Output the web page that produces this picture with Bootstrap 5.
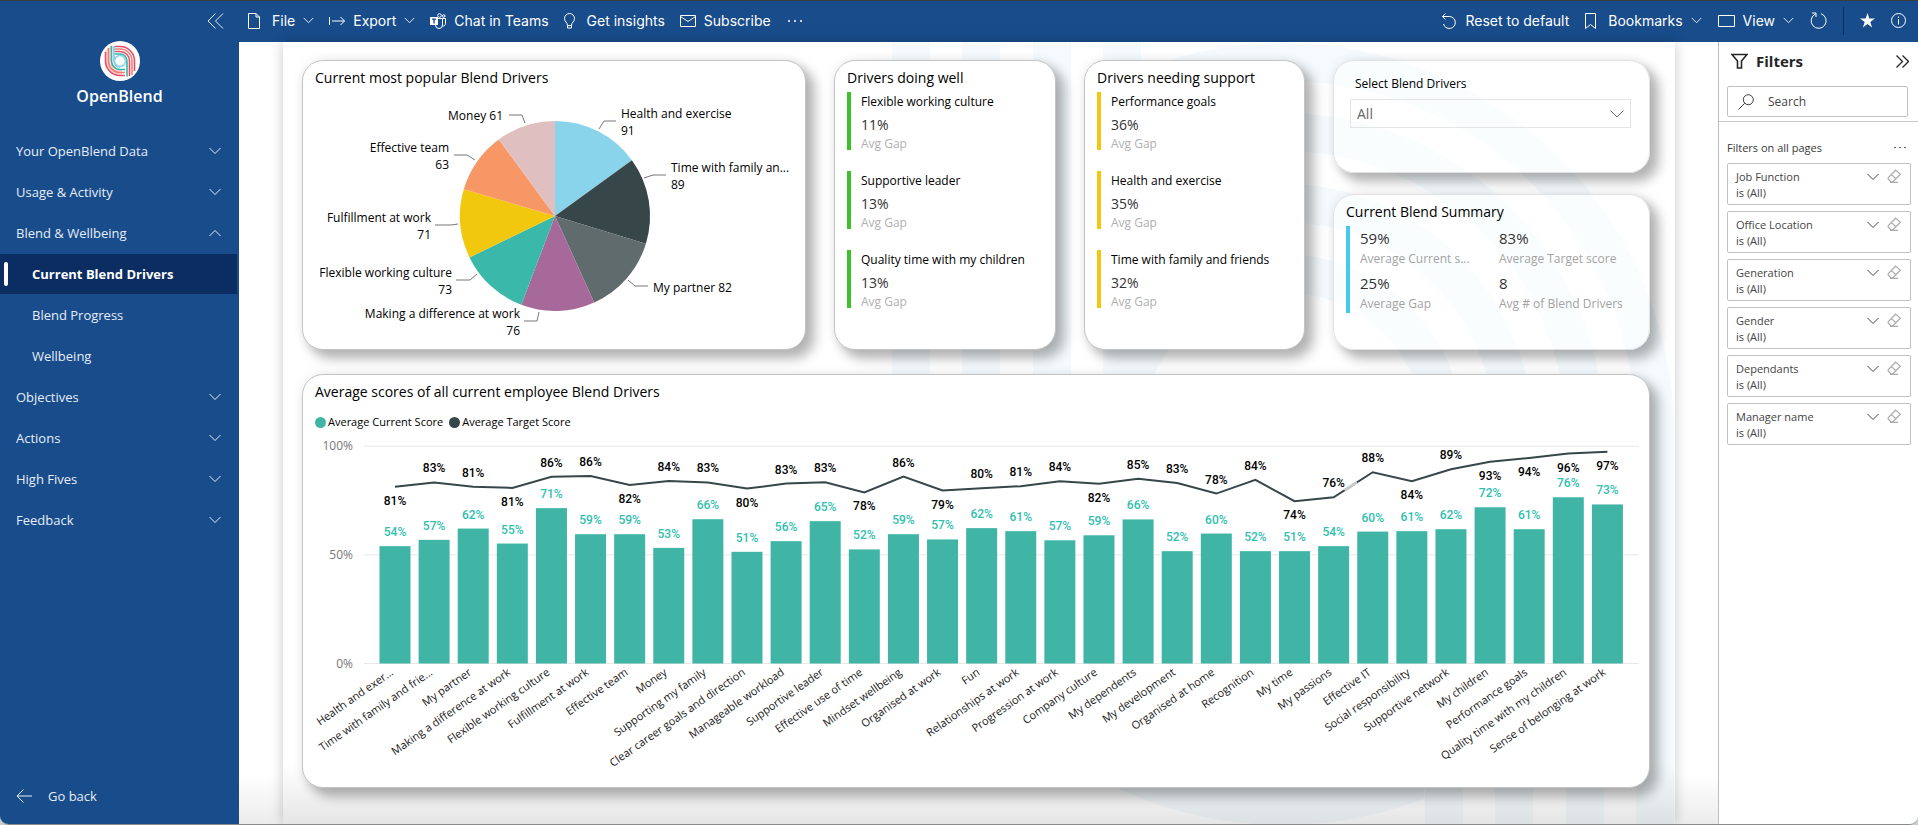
<!DOCTYPE html>
<html lang="en">
<head>
<meta charset="utf-8">
<meta name="viewport" content="width=device-width, initial-scale=1">
<title>OpenBlend - Current Blend Drivers</title>
<link href="https://cdn.jsdelivr.net/npm/bootstrap@5.3.0/dist/css/bootstrap.min.css" rel="stylesheet">
<style>
:root { --brand: #184c8b; --brand-dark: #0c2d62; --ui: "Open Sans", "Noto Sans", sans-serif; }
body { font-family: var(--ui); font-size: 13px; line-height: 20px; color: #000; background: #c9ccd1; }
.app-frame { min-height: 100vh; border-top: 1px solid #3b3b3b; border-bottom: 1px solid #8a8a8a; border-radius: 0 0 9px 9px; overflow: hidden; }
svg { display: block; flex: none; }
.ico { fill: none; stroke: currentColor; stroke-width: 1; }
.plain-btn { background: none; border: 0; padding: 0; color: inherit; }

.side-panel { width: 239px; flex: none; background: var(--brand); color: #e6edf6; }
.side-head { height: 121px; padding: 12px 15px 0 0; }
.brand-name { font-size: 16px; line-height: 22px; font-weight: 600; color: #fff; }
.side-nav a { display: flex; align-items: center; justify-content: space-between; height: 41px; padding: 0 18px 0 16px; color: inherit; text-decoration: none; font-size: 13px; }
.side-nav a.sub { padding-left: 32px; }
.side-nav a.current { height: 40px; margin: 1px 2px 0 0; padding-left: 4px; gap: 24px; justify-content: flex-start; background: var(--brand-dark); color: #fff; font-weight: 700; }
.side-nav a.current::before { content: ""; width: 4px; height: 24px; border-radius: 2px; background: #fff; }
.go-back { padding: 0 16px; gap: 16px; margin-bottom: 18px; }

.top-bar { height: 41px; background: var(--brand); color: #fff; font-family: Inter, "Liberation Sans", sans-serif; font-size: 14px; padding: 0 12px 2px 9px; }
.top-bar .plain-btn { display: flex; align-items: center; gap: 8px; }
.bar-left { gap: 15px; }
.top-rule { width: 1px; height: 28px; background: var(--brand-dark); }

.stage { padding: 0 43px 0 44px; background: linear-gradient(to bottom, transparent calc(100% - 50px), #ececec) #fff; }
.report { padding: 18px 25px 20px 19px; box-shadow: 0 0 12px rgba(0,0,0,.22);
  background: linear-gradient(to bottom, transparent calc(100% - 60px), rgba(0,0,0,.1)),
  url("data:image/svg+xml,%3Csvg xmlns='http://www.w3.org/2000/svg' width='784' height='784'%3E%3Cg fill='none' stroke='%23f4fafd' stroke-width='38'%3E%3Ccircle cx='392' cy='392' r='372'/%3E%3Ccircle cx='392' cy='392' r='302'/%3E%3Ccircle cx='392' cy='392' r='231'/%3E%3Ccircle cx='392' cy='392' r='161'/%3E%3Cpath fill='%23fff' stroke='none' d='M0 0h250v392H0zM533 392h251v392H533z'/%3E%3Cpath d='M20 0v392M90 0v392M161 0v392M231 0v392M553 392v392M623 392v392M694 392v392M764 392v392'/%3E%3C/g%3E%3C/svg%3E") right top no-repeat #fff; }
.tiles { display: grid; grid-template-columns: 504fr 222fr 221fr 317fr; column-gap: 28px; margin-bottom: 24px; }
.tile { background: #fff; border: 1px solid #c4c4c4; border-radius: 21px; box-shadow: 8px 8px 12px 1px rgba(0,0,0,.28), 0 0 12px rgba(0,0,0,.08); }
.tile.see-through { background: rgba(255,255,255,.55); border-color: #e2e2e2; background-clip: padding-box; }
.tile-title { font-size: 14px; line-height: 22px; font-weight: 400; margin: 0; padding: 6px 12px 0; }
svg text { font-family: var(--ui); }
.pie-svg, .combo-svg { width: 100%; height: auto; }
.pie-svg text { font-size: 12px; }
.combo-svg .axis { font-size: 12px; fill: #777; text-anchor: end; }
.combo-svg .cat { font-size: 11px; fill: #222; text-anchor: end; }
.combo-svg .val { font-family: Roboto, "Open Sans", sans-serif; font-size: 12px; font-weight: 500; text-anchor: middle; }

.drivers { display: flex; flex-direction: column; gap: 21px; padding: 3px 12px 0; }
.driver { border-left: 4px solid #3cc12d; padding-left: 10px; }
.driver.low { border-color: #f2c80f; }
.driver-name { font-size: 12px; line-height: 20px; white-space: nowrap; }
.driver-val { font-size: 14px; line-height: 26px; color: #333; }
.driver-note { font-size: 12px; line-height: 12px; color: #b0b0b0; }

.slicers { display: flex; flex-direction: column; gap: 21px; }
.slicer { height: 113px; padding: 12px 18px 0 16px; }
.slicer label { padding-left: 5px; line-height: 22px; font-size: 12px; }
.slicer select { height: 29px; margin-top: 4px; padding: 0 6px; border: 1px solid #e4e4e4; border-radius: 0; color: #666; font-size: 14px; line-height: 27px; background-color: transparent; background-size: 14px 8px; background-position: right 6px center; background-repeat: no-repeat; appearance: none;
  background-image: url("data:image/svg+xml,%3Csvg xmlns='http://www.w3.org/2000/svg' width='14' height='8' fill='none' stroke='%23666'%3E%3Cpath d='M.5.5 7 7 13.500.5'/%3E%3C/svg%3E"); }
.kpis { display: grid; grid-template-columns: 139px 1fr; row-gap: 3px; border-left: 4px solid #45cbe8; margin: 3px 6px 0 12px; padding-left: 10px; height: 87px; white-space: nowrap; }
.kpi-val { font-size: 15px; line-height: 24px; color: #333; }
.kpi-note { font-size: 12px; line-height: 18px; color: #a3a3a3; }
.legend-row { font-size: 11px; line-height: 20px; padding: 9px 12px 2px; gap: 6px; }
.key-dot { width: 11px; height: 11px; border-radius: 50%; display: inline-block; margin-right: 2px; }

.filter-pane { width: 200px; flex: none; border-left: 1px solid #bdbdbd; color: #3a3a3a; background: #fff; font-size: 12px; }
.pane-head { height: 44px; padding: 0 9px 6px 12px; color: #252525; }
.pane-title { font-size: 15px; font-weight: 700; margin: 0; }
.search-box { margin: 0 10px 4px 8px; height: 31px; border: 1px solid #c0c0c0; border-radius: 2px; padding: 0 10px; gap: 14px; }
.search-box input { border: 0; outline: 0; padding: 0; min-width: 0; width: 100%; font-size: 12px; color: #333; background: none; }
.search-box input::placeholder { color: #444; opacity: 1; }
.pane-sub { height: 42px; padding: 10px 8px 0; border-top: 1px solid #c8c8c8; font-size: 11px; }
.filter-list { gap: 6px; padding: 0 7px 0 8px; }
.filter-item { border: 1px solid #c0c0c0; border-radius: 2px; font-size: 11px; line-height: 16px; padding: 5px 9px 5px 8px; height: 42px; color: #444; }
</style>
</head>
<body>
<svg width="0" height="0" class="position-absolute" aria-hidden="true">
  <symbol id="chev" viewBox="0 0 12 8"><path d="M.5 1 6 6.500 11.500 1"/></symbol>
  <symbol id="eraser" viewBox="0 0 12 12"><path d="M1 7.500 7.500 1l4 3.500L5 11H3.500L1 8.500zM3.800 4.800l4 3.600M2.500 11.500h7"/></symbol>
</svg>
<div class="app-frame d-flex">
  <nav class="side-panel d-flex flex-column" aria-label="Report pages">
    <div class="side-head">
      <button class="plain-btn d-block ms-auto" aria-label="Collapse"><svg class="ico" width="17" height="16" viewBox="0 0 17 16" stroke-width="1.200"><path d="M8.500.5 1 8l7.500 7.500M16 .5 8.500 8l7.500 7.500"/></svg></button>
      <div class="d-flex flex-column align-items-center gap-1 pt-2" style="padding-left:15px">
        <svg class="mt-1" width="40" height="40" viewBox="0 0 40 40" fill="none">
          <circle cx="20" cy="20" r="20" fill="#fff"/>
          <path d="M5 10.500 8 7l4-3v16a8 8 0 0 0 8 8h2v7a15 15 0 0 1-17-15z" fill="#fbd3d3"/>
          <g stroke-width="1.600">
            <path d="M5.500 11v9a14.500 14.500 0 0 0 14.500 14.500h5" stroke="#ea4c6c"/>
            <path d="M8.500 7v13a11.500 11.500 0 0 0 11.500 11.500h5" stroke="#f27d6c"/>
            <path d="M11.500 5v15a8.500 8.500 0 0 0 8.500 8.500h5" stroke="#35b5a5"/>
            <path d="M14 5v15a6.500 6.500 0 0 0 6 6" stroke="#6ec8e6"/>
            <path d="M15 5.500h5A14.500 14.500 0 0 1 34.500 20v10" stroke="#ea4c6c"/>
            <path d="M15 8h5a12 12 0 0 1 12 12v14" stroke="#f3836c"/>
            <path d="M15 10.500h5A9.500 9.500 0 0 1 29.500 20v15" stroke="#ea4c6c"/>
            <path d="M15 13h5a7 7 0 0 1 7 7v15.500" stroke="#35b5a5"/>
            <circle cx="20" cy="20" r="5.500" stroke="#8ad4ec"/>
          </g>
        </svg>
        <div class="brand-name">OpenBlend</div>
      </div>
    </div>
    <div class="side-nav pt-2">
      <a href="#">Your OpenBlend Data<svg class="ico" width="12" height="8"><use href="#chev"/></svg></a>
      <a href="#">Usage &amp; Activity<svg class="ico" width="12" height="8"><use href="#chev"/></svg></a>
      <a href="#">Blend &amp; Wellbeing<svg class="ico" width="12" height="8" viewBox="0 0 12 8"><path d="M.5 7 6 1.500 11.500 7"/></svg></a>
      <a href="#" class="current" aria-current="page">Current Blend Drivers</a>
      <a href="#" class="sub">Blend Progress</a>
      <a href="#" class="sub">Wellbeing</a>
      <a href="#">Objectives<svg class="ico" width="12" height="8"><use href="#chev"/></svg></a>
      <a href="#">Actions<svg class="ico" width="12" height="8"><use href="#chev"/></svg></a>
      <a href="#">High Fives<svg class="ico" width="12" height="8"><use href="#chev"/></svg></a>
      <a href="#">Feedback<svg class="ico" width="12" height="8"><use href="#chev"/></svg></a>
    </div>
    <button class="plain-btn go-back d-flex align-items-center mt-auto"><svg class="ico" width="16" height="14" viewBox="0 0 16 14"><path d="M7.500.5 1 7l6.500 6.500M1 7h15"/></svg>Go back</button>
  </nav>

  <div class="d-flex flex-column flex-fill" style="min-width:0">
    <header class="top-bar d-flex align-items-center justify-content-between">
      <div class="bar-left d-flex align-items-center">
        <button class="plain-btn"><svg class="ico me-1" width="12" height="16" viewBox="0 0 12 16" stroke-width="1.200"><path d="M.5.500h7.500l3.500 3.500v11.500H.5zM8 .5V4h3.500"/></svg>File<svg class="ico" width="11" height="7"><use href="#chev"/></svg></button>
        <button class="plain-btn"><svg class="ico" width="16" height="10" viewBox="0 0 16 10"><path d="M.5 1v8M3 5h12.500M11.500 1l4 4-4 4"/></svg>Export<svg class="ico" width="11" height="7"><use href="#chev"/></svg></button>
        <button class="plain-btn"><svg class="ico" width="16" height="16" viewBox="0 0 16 16"><path fill="currentColor" stroke="none" fill-rule="evenodd" d="M0 4h8v8H0zM2 5.500v1.200h1.400V10.500h1.300V6.700H6V5.500z"/><circle cx="9.500" cy="2.500" r="1.800"/><circle cx="13.800" cy="3" r="1.300"/><path d="M8 5.500h4.500v6.500a3.500 3.500 0 0 1-7 0M12.500 5.500h3v5a2.500 2.500 0 0 1-3 2.500"/></svg>Chat in Teams</button>
        <button class="plain-btn"><svg class="ico me-1" width="11" height="16" viewBox="0 0 11 16"><path d="M3.500 12.500c0-3-3-3.800-3-7a5 5 0 0 1 10 0c0 3.200-3 4-3 7zM3.500 12.500v2.500h4v-2.500"/></svg>Get insights</button>
        <button class="plain-btn"><svg class="ico" width="16" height="12" viewBox="0 0 16 12"><path d="M.5.500h15v11H.5zM.5 1.500 8 6.500l7.500-5"/></svg>Subscribe</button>
        <button class="plain-btn" aria-label="More"><svg width="16" height="4" fill="currentColor"><circle cx="3" cy="2" r="1"/><circle cx="9" cy="2" r="1"/><circle cx="15" cy="2" r="1"/></svg></button>
      </div>
      <div class="d-flex align-items-center gap-3">
        <button class="plain-btn"><svg class="ico" width="16" height="16" viewBox="0 0 16 16"><path d="M4.500.5 1.500 3.500l3 3M1.500 3.500H8.500a6 6 0 1 1-6 7.500"/></svg>Reset to default</button>
        <button class="plain-btn"><svg class="ico me-1" width="11" height="16" viewBox="0 0 11 16"><path d="M.5.500h10v15l-5-4-5 4z"/></svg>Bookmarks<svg class="ico" width="11" height="7"><use href="#chev"/></svg></button>
        <button class="plain-btn"><svg class="ico" width="17" height="12" viewBox="0 0 17 12"><path d="M.5.500h16v11H.5z"/></svg>View<svg class="ico" width="11" height="7"><use href="#chev"/></svg></button>
        <button class="plain-btn" aria-label="Refresh"><svg class="ico" width="17" height="17" viewBox="0 0 17 17"><path d="M5.500 2A7.500 7.500 0 1 0 11 1.700M2 1h4v4"/></svg></button>
        <div class="top-rule"></div>
        <button class="plain-btn" aria-label="Favourite"><svg width="15" height="15" viewBox="0 0 15 15" fill="currentColor"><path d="M7.500 0l1.800 5.500H15l-4.700 3.400L12.100 14.500 7.500 11l-4.600 3.500 1.800-5.600L0 5.500h5.700z"/></svg></button>
        <button class="plain-btn" aria-label="Information"><svg class="ico" width="15" height="15" viewBox="0 0 15 15"><circle cx="7.500" cy="7.500" r="7"/><path d="M7.500 6v5.500M7.500 3.500v1.300"/></svg></button>
      </div>
    </header>

    <div class="d-flex flex-fill">
      <main class="stage flex-fill d-flex" style="min-width:0">
        <div class="report flex-fill">
          <div class="tiles">
            <section class="tile">
              <h2 class="tile-title">Current most popular Blend Drivers</h2>
              <svg class="pie-svg" id="pie" viewBox="0 0 502 260" role="img" aria-label="Current most popular Blend Drivers"></svg>
            </section>
            <section class="tile">
              <h2 class="tile-title">Drivers doing well</h2>
              <div class="drivers">
                <div class="driver"><div class="driver-name">Flexible working culture</div><div class="driver-val">11%</div><div class="driver-note">Avg Gap</div></div>
                <div class="driver"><div class="driver-name">Supportive leader</div><div class="driver-val">13%</div><div class="driver-note">Avg Gap</div></div>
                <div class="driver"><div class="driver-name">Quality time with my children</div><div class="driver-val">13%</div><div class="driver-note">Avg Gap</div></div>
              </div>
            </section>
            <section class="tile">
              <h2 class="tile-title">Drivers needing support</h2>
              <div class="drivers">
                <div class="driver low"><div class="driver-name">Performance goals</div><div class="driver-val">36%</div><div class="driver-note">Avg Gap</div></div>
                <div class="driver low"><div class="driver-name">Health and exercise</div><div class="driver-val">35%</div><div class="driver-note">Avg Gap</div></div>
                <div class="driver low"><div class="driver-name">Time with family and friends</div><div class="driver-val">32%</div><div class="driver-note">Avg Gap</div></div>
              </div>
            </section>
            <div class="slicers">
              <section class="tile see-through slicer">
                <label class="d-block" for="drivers">Select Blend Drivers</label>
                <select id="drivers" class="w-100"><option>All</option></select>
              </section>
              <section class="tile see-through flex-fill">
                <h2 class="tile-title">Current Blend Summary</h2>
                <div class="kpis">
                  <div><div class="kpi-val">59%</div><div class="kpi-note">Average Current s...</div></div>
                  <div><div class="kpi-val">83%</div><div class="kpi-note">Average Target score</div></div>
                  <div><div class="kpi-val">25%</div><div class="kpi-note">Average Gap</div></div>
                  <div><div class="kpi-val">8</div><div class="kpi-note">Avg # of Blend Drivers</div></div>
                </div>
              </section>
            </div>
          </div>
          <section class="tile">
            <h2 class="tile-title">Average scores of all current employee Blend Drivers</h2>
            <div class="legend-row d-flex">
              <span class="d-flex align-items-center"><i class="key-dot" style="background:#40b5a6"></i>Average Current Score</span>
              <span class="d-flex align-items-center"><i class="key-dot" style="background:#374649"></i>Average Target Score</span>
            </div>
            <svg class="combo-svg" id="combo" viewBox="0 0 1346 353" role="img" aria-label="Average scores of all current employee Blend Drivers"></svg>
          </section>
        </div>
      </main>

      <aside class="filter-pane">
        <div class="pane-head d-flex align-items-center gap-2">
          <svg class="ico" width="17" height="16" viewBox="0 0 17 16" style="stroke-width:1.6"><path d="M1 1.500h15L10.500 8v7h-4V8z"/></svg>
          <h2 class="pane-title">Filters</h2>
          <button class="plain-btn ms-auto" aria-label="Collapse filters"><svg class="ico" width="13" height="13" viewBox="0 0 13 13" style="stroke-width:1.3"><path d="M.5.500l6 6-6 6M6.500.500l6 6-6 6"/></svg></button>
        </div>
        <div class="search-box d-flex align-items-center">
          <svg class="ico" width="16" height="16" viewBox="0 0 16 16"><circle cx="10.300" cy="5.700" r="5"/><path d="M6.800 9.200.5 15.500"/></svg>
          <input type="text" placeholder="Search" aria-label="Search filters">
        </div>
        <div class="pane-sub d-flex align-items-center justify-content-between"><span>Filters on all pages</span>
          <button class="plain-btn me-1" aria-label="More filter options"><svg width="12" height="3" fill="currentColor"><circle cx="1" cy="1.500" r=".8"/><circle cx="6" cy="1.500" r=".8"/><circle cx="11" cy="1.500" r=".8"/></svg></button></div>
        <div id="filters" class="filter-list d-flex flex-column"></div>
      </aside>
    </div>
  </div>
</div>

<script src="https://cdn.jsdelivr.net/npm/bootstrap@5.3.0/dist/js/bootstrap.bundle.min.js"></script>
<script>
document.getElementById('filters').innerHTML =
  ['Job Function', 'Office Location', 'Generation', 'Gender', 'Dependants', 'Manager name'].map(n =>
  `<div class="filter-item d-flex"><div class="flex-fill">${n}<br>is (All)</div>
   <button class="plain-btn align-self-start me-2 pt-1" aria-label="Expand ${n}"><svg class="ico" width="12" height="8"><use href="#chev"/></svg></button>
   <button class="plain-btn align-self-start" style="color:#aaa" aria-label="Clear ${n}"><svg class="ico" width="14" height="14"><use href="#eraser"/></svg></button></div>`).join('');

// name, value, colour, label x, label baseline, anchor, leader points
const slices = [
  ['Health and exercise', 91, '#8ad4eb', 318, 29, 'start', '296,40 301,32 313,32', 1],
  ['Time with family an...', 89, '#374649', 368, 83, 'start', '341,89 350,86 363,86', 1],
  ['My partner', 82, '#5f6b6d', 350, 203, 'start', '325,191 332,197 345,197', 0],
  ['Making a difference at work', 76, '#a66999', 217, 229, 'end', '236,223 234,232 221,232', 1],
  ['Flexible working culture', 73, '#3ab8aa', 149, 188, 'end', '174,185 167,191 153,191', 1],
  ['Fulfillment at work', 71, '#f2c80f', 128, 133, 'end', '155,135 148,136 132,136', 1],
  ['Effective team', 63, '#f89766', 146, 63, 'end', '172,71 164,66 151,66', 1],
  ['Money', 61, '#dfbfbf', 200, 31, 'end', '222,34 219,26 206,26', 0]
];
const total = slices.reduce((s, d) => s + d[1], 0), cx = 252, cy = 127, r = 95;
let turn = 0, pie = '';
const rim = t => `${(cx + r * Math.sin(t * 2 * Math.PI)).toFixed(1)} ${(cy - r * Math.cos(t * 2 * Math.PI)).toFixed(1)}`;
for (const [name, v, fill, x, y, anchor, pts, stacked] of slices) {
  const next = turn + v / total;
  pie += `<path fill="${fill}" d="M${cx} ${cy}L${rim(turn)}A${r} ${r} 0 0 1 ${rim(next)}z"/>
    <polyline points="${pts}" fill="none" stroke="#777"/>` +
    (stacked ? `<text x="${x}" y="${y}" text-anchor="${anchor}">${name}</text><text x="${x}" y="${y + 17}" text-anchor="${anchor}">${v}</text>`
             : `<text x="${x}" y="${y}" text-anchor="${anchor}">${name} ${v}</text>`);
  turn = next;
}
document.getElementById('pie').innerHTML = pie;

// name, current label, current, target label, target, 1 = target label above the line
const scores = [
  ['Health and exer...', 54, 54, 81, 81.3, 0], ['Time with family and frie...', 57, 56.9, 83, 83.3, 1],
  ['My partner', 62, 62.1, 81, 81.3, 1], ['Making a difference at work', 55, 55.2, 81, 80.8, 0],
  ['Flexible working culture', 71, 71.5, 86, 85.9, 1], ['Fulfillment at work', 59, 59.5, 86, 86.3, 1],
  ['Effective team', 59, 59.5, 82, 82.2, 0], ['Money', 53, 53.2, 84, 84, 1],
  ['Supporting my family', 66, 66.4, 83, 83.3, 1], ['Clear career goals and direction', 51, 51.4, 80, 80.5, 0],
  ['Manageable workload', 56, 56.3, 83, 82.8, 1], ['Supportive leader', 65, 65.5, 83, 83.4, 1],
  ['Effective use of time', 52, 52.5, 78, 78.7, 0], ['Mindset wellbeing', 59, 59.5, 86, 86, 1],
  ['Organised at work', 57, 57.1, 79, 79.6, 0], ['Fun', 62, 62.3, 80, 80.7, 1],
  ['Relationships at work', 61, 60.9, 81, 81.6, 1], ['Progression at work', 57, 56.7, 84, 83.9, 1],
  ['Company culture', 59, 59, 82, 82.7, 0], ['My dependents', 66, 66.3, 85, 85, 1],
  ['My development', 52, 51.7, 83, 83.1, 1], ['Organised at home', 60, 59.8, 78, 78.2, 1],
  ['Recognition', 52, 51.7, 84, 84.5, 1], ['My time', 51, 51.7, 74, 74.7, 0],
  ['My passions', 54, 54, 76, 76.5, 1], ['Effective IT', 60, 60.7, 88, 88, 1],
  ['Social responsibility', 61, 60.9, 84, 83.9, 0], ['Supportive network', 62, 61.8, 89, 89.4, 1],
  ['My children', 72, 71.9, 93, 92.8, 0], ['Performance goals', 61, 61.8, 94, 94.6, 0],
  ['Quality time with my children', 76, 76.5, 96, 96.6, 0], ['Sense of belonging at work', 73, 73.2, 97, 97.4, 0]
];
const yOf = p => 229.5 - p * 2.173, xOf = i => 92 + i * 39.11;
let combo = '';
for (const p of [100, 50, 0])
  combo += `<path d="M61 ${yOf(p)}H1336" stroke="#e8e8e8"/><text class="axis" x="50" y="${yOf(p) + 4}">${p}%</text>`;
scores.forEach(([name, cl, c], i) => {
  combo += `<rect x="${xOf(i) - 15.5}" y="${yOf(c)}" width="31" height="${c * 2.173}" fill="#40b5a6"/>`;
});
combo += `<polyline fill="none" stroke="#374649" stroke-width="2" points="${scores.map((s, i) => xOf(i) + ',' + yOf(s[4])).join(' ')}"/>`;
// the line fades where it leaves the "My passions" label
const fade = f => `${xOf(24 + f)} ${yOf(76.5 + 11.5 * f)}`;
combo += `<path d="M${fade(.28)}L${fade(.6)}" stroke="#c6caca" stroke-width="3"/>`;
scores.forEach(([name, cl, c, tl, t, up], i) => {
  const x = xOf(i);
  combo += `<text class="val" x="${x}" y="${yOf(c) - 10}" fill="#2fc0af">${cl}%</text>
    <text class="val" x="${x}" y="${yOf(t) + (up ? -10 : 18)}">${tl}%</text>
    <text class="cat" transform="translate(${x - 1} 240) rotate(-35)">${name}</text>`;
});
document.getElementById('combo').innerHTML = combo;
</script>
</body>
</html>
